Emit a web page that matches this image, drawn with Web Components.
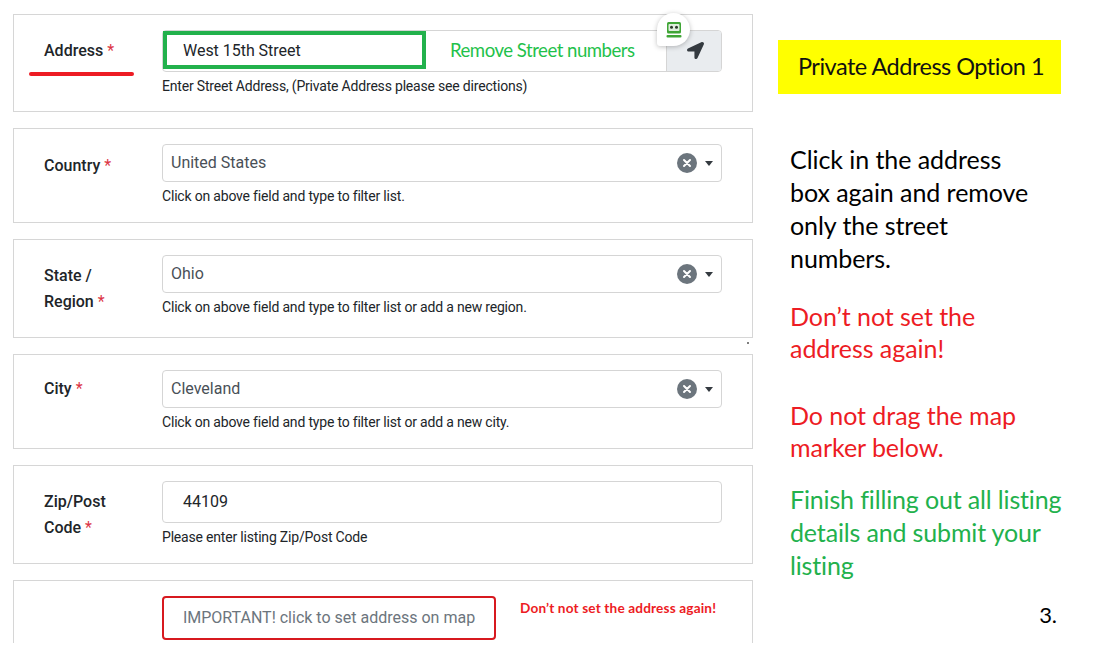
<!DOCTYPE html>
<html><head><meta charset="utf-8"><title>Private Address Option 1</title>
<style>
html,body{margin:0;padding:0;background:#fff}
body{height:643px;overflow:hidden;font-family:Roboto,sans-serif}
</style></head><body>
<x-page>
  <x-form slot="form">
    <x-card top="15" pb="14">
      <span slot="label" style="position:relative;display:block;margin-top:8px">Address <x-req></x-req><x-underline></x-underline></span>
      <x-address value="West 15th Street" note="Remove Street numbers"></x-address>
      <span slot="hint">Enter Street Address, (Private Address please see directions)</span>
    </x-card>
    <x-card top="15" pb="15">
      <span slot="label" style="display:block;margin-top:9px">Country <x-req></x-req></span>
      <x-select value="United States"></x-select>
      <span slot="hint">Click on above field and type to filter list.</span>
    </x-card>
    <x-card top="15" pb="19" mark>
      <span slot="label" style="display:block;margin-top:8px">State /<br>Region <x-req></x-req></span>
      <x-select value="Ohio"></x-select>
      <span slot="hint">Click on above field and type to filter list or add a new region.</span>
    </x-card>
    <x-card top="15" pb="15">
      <span slot="label" style="display:block;margin-top:6px">City <x-req></x-req></span>
      <x-select value="Cleveland"></x-select>
      <span slot="hint">Click on above field and type to filter list or add a new city.</span>
    </x-card>
    <x-card top="15" pb="15">
      <span slot="label" style="display:block;margin-top:8px">Zip/Post<br>Code <x-req></x-req></span>
      <x-input value="44109"></x-input>
      <span slot="hint">Please enter listing Zip/Post Code</span>
    </x-card>
    <x-card top="15" pb="0" clip>
      <x-setaddr label="IMPORTANT! click to set address on map" note="Don’t not set the address again!"></x-setaddr>
    </x-card>
  </x-form>
  <x-notes slot="notes"></x-notes>
</x-page>
<script>
function def(name, css, html, setup){
  customElements.define(name, class extends HTMLElement{
    connectedCallback(){
      if(this.shadowRoot) return;
      const r=this.attachShadow({mode:'open'});
      const get=a=>this.getAttribute(a)||'';
      r.innerHTML='<style>'+css+'</style>'+(typeof html==='function'?html(get):html);
      if(setup) setup(this,r);
    }
  });
}
def('x-page',':host{display:flex;align-items:flex-start;height:643px;overflow:hidden}',
  '<slot name="form"></slot><slot name="notes"></slot>');
def('x-form',':host{display:flex;flex-direction:column;gap:16px;width:740px;margin:14px 0 0 13px;flex:none}','<slot></slot>');
def('x-card',`:host{display:grid;grid-template-columns:118px 560px;box-sizing:border-box;width:740px;border:1px solid #d6d6d6;padding:15px 30px 15px 30px;position:relative;background:#fff}
:host([clip]){border-bottom:0;height:63px;overflow:hidden}
.l{font:500 16px/26px Roboto,sans-serif;color:#212529}
.h{font:14px/21px Roboto,sans-serif;color:#212529;margin-top:4px;letter-spacing:-.19px}
.m{position:absolute;right:3px;bottom:-7px;width:2px;height:2px;background:#555;border-radius:50%}`,
  g=>`<div class="l"><slot name="label"></slot></div><div><slot></slot><div class="h" part="h"><slot name="hint"></slot></div></div>`,
  (el,r)=>{
    const t=el.getAttribute('top'),b=el.getAttribute('pb');
    el.style.paddingTop=t+'px';el.style.paddingBottom=b+'px';
    if(el.hasAttribute('mark')){const d=document.createElement('div');d.className='m';r.appendChild(d);}
    if(el.hasAttribute('clip')) r.querySelector('.h').style.display='none';
  });
def('x-req',':host{display:inline;color:#dc3545;font-weight:400}','*');
def('x-underline',':host{position:absolute;left:-15px;top:34px;width:105px;height:4px;border-radius:2px;background:#ed1c24}','');
def('x-address',`:host{display:flex;height:42px;box-sizing:border-box;border:1px solid #d5d5d5;border-radius:4px;position:relative}
.box{box-sizing:border-box;width:263px;height:38px;border:4px solid #22b14c;font:16px/32px Roboto,sans-serif;color:#212529;padding-left:16px;letter-spacing:-.03px}
.note{flex:1;font:18.6px/39px Lato,sans-serif;color:#1fc14b;padding-left:24px;letter-spacing:-.5px;white-space:nowrap}
.btn{width:54px;background:#e9ecef;border-left:1px solid #d5d5d5;border-radius:0 3px 3px 0;display:flex;align-items:center;justify-content:center}
.btn svg{width:17px;height:17px;display:block;margin:-2px 0 0 2px}
.bub{position:absolute;left:494px;top:-18px;width:33px;height:33px;background:#fff;border-radius:50% 50% 50% 3px;box-shadow:0 1px 5px rgba(0,0,0,.25);display:flex;align-items:center;justify-content:center}`,
  g=>`<div class="box">${g('value')}</div><div class="note">${g('note')}</div>
  <div class="btn"><svg viewBox="0 0 512 512"><path fill="#343a40" d="M444.52 3.52L28.74 195.42c-47.97 22.39-31.98 92.75 19.19 92.75h175.91v175.91c0 51.17 70.36 67.17 92.75 19.19l191.9-415.78c15.99-38.39-25.59-79.97-63.97-63.97z"/></svg></div>
  <div class="bub"><svg width="18" height="18" viewBox="0 0 18 18"><rect x="2" y="1" width="14" height="11.5" rx="1.5" fill="#3fa535"/><rect x="3.5" y="3" width="11" height="7" rx="1" fill="#dfeedd"/><circle cx="6.5" cy="6.3" r="1.5" fill="#2b3a2b"/><circle cx="11.5" cy="6.3" r="1.5" fill="#2b3a2b"/><rect x="1.5" y="14" width="15" height="2.4" rx="1" fill="#3fa535"/></svg></div>`);
def('x-select',`:host{display:flex;align-items:center;box-sizing:border-box;height:38px;border:1px solid #d5d5d5;border-radius:4px;font:16px/24px Roboto,sans-serif;color:#495057;padding-left:8px}
.v{flex:1}
.x{width:20px;height:20px;display:block;margin-right:8px}
.c{width:0;height:0;border-left:4px solid transparent;border-right:4px solid transparent;border-top:5px solid #343a40;margin-right:8px;margin-top:1px}`,
  g=>`<div class="v">${g('value')}</div><svg class="x" viewBox="0 0 20 20"><circle cx="10" cy="10" r="10" fill="#6c757d"/><path d="M7 7l6 6M13 7l-6 6" stroke="#fff" stroke-width="2" stroke-linecap="round"/></svg><div class="c"></div>`);
def('x-input',`:host{display:block;box-sizing:border-box;height:42px;border:1px solid #d5d5d5;border-radius:4px;font:16px/40px Roboto,sans-serif;color:#212529;padding-left:20px}`,
  g=>g('value'));
def('x-setaddr',`:host{display:flex;align-items:flex-start}
.b{box-sizing:border-box;width:334px;height:44px;border:2px solid #d7191f;border-radius:4px;font:16px/40px Roboto,sans-serif;color:#6c757d;text-align:center;white-space:nowrap;flex:none}
.n{font:700 13.6px/24px Lato,sans-serif;color:#ed1c24;margin-left:24px;white-space:nowrap;letter-spacing:.16px}`,
  g=>`<div class="b">${g('label')}</div><div class="n">${g('note')}</div>`);
def('x-notes',`:host{display:flex;flex-direction:column;margin:40px 0 0 25px;width:290px;font:25px/33px Lato,sans-serif;color:#000;flex:none;letter-spacing:-.05px}
.y{box-sizing:border-box;width:283px;height:54px;background:#ff0;font-size:23.5px;line-height:53px;text-align:center;color:#111;white-space:nowrap;letter-spacing:-.5px;padding-left:3px}
.t{margin-left:12px}
.k{margin-top:49px;letter-spacing:-.06px}
.r{color:#ed1c24;line-height:32px}
.r1{margin-top:25px}.r2{margin-top:35px}
.g{color:#22b14c;margin-top:20px;letter-spacing:-.15px}
.n{align-self:flex-end;margin:18px 11px 0 0;font-size:22px;line-height:30px}`,
  `<div class="y">Private Address Option 1</div>
  <div class="t k">Click in the address<br>box again and remove<br>only the street<br>numbers.</div>
  <div class="t r r1">Don’t not set the<br>address again!</div>
  <div class="t r r2">Do not drag the map<br>marker below.</div>
  <div class="t g">Finish filling out all listing<br>details and submit your<br>listing</div>
  <div class="n">3.</div>`);
</script>
</body></html>
